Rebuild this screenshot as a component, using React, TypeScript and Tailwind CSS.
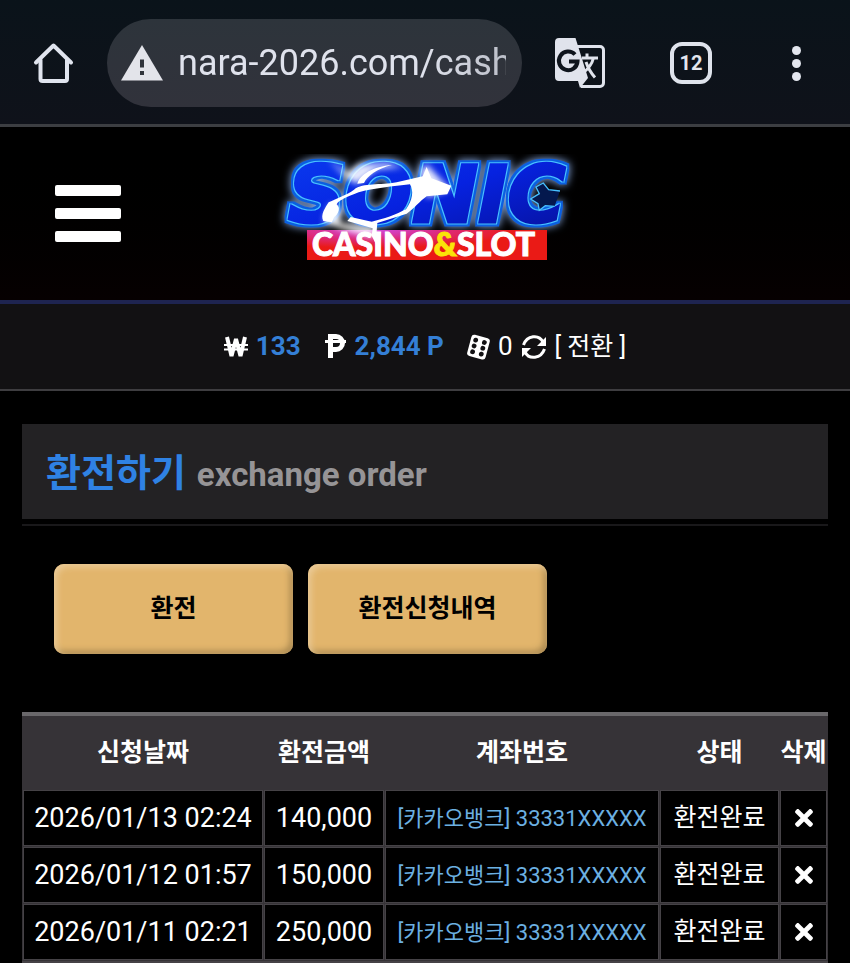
import { useState } from 'react';
import { FaTimes } from 'react-icons/fa';

interface ExchangeOrder {
  date: string;
  amount: string;
  account: string;
  status: string;
}

const initialOrders: ExchangeOrder[] = [
  { date: '2026/01/13 02:24', amount: '140,000', account: '[카카오뱅크] 33331XXXXX', status: '환전완료' },
  { date: '2026/01/12 01:57', amount: '150,000', account: '[카카오뱅크] 33331XXXXX', status: '환전완료' },
  { date: '2026/01/11 02:21', amount: '250,000', account: '[카카오뱅크] 33331XXXXX', status: '환전완료' },
];

function HomeIcon() {
  return (
    <svg width="42" height="42" viewBox="0 0 42 42" fill="none" stroke="#e0e4ee" strokeWidth="4" strokeLinecap="round" strokeLinejoin="round">
      <path d="M3 20.500L20.500 3.500L38 20.500" />
      <path d="M7.500 18V37a2 2 0 0 0 2 2H32a2 2 0 0 0 2-2V18" />
    </svg>
  );
}

function WarningIcon() {
  return (
    <svg width="42" height="36" viewBox="0 0 42 36" className="shrink-0">
      <path d="M21 0L42 35.500H0Z" fill="#e3e4ea" />
      <path d="M19 14.500h4v8h-4zM19 26h4v4h-4z" fill="#30343b" />
    </svg>
  );
}

function TranslateIcon() {
  return (
    <svg width="50" height="50" viewBox="0 0 50 50" fill="none">
      <path d="M21 8.500H45a3.500 3.500 0 0 1 3.500 3.500V45a3.500 3.500 0 0 1-3.500 3.500H26" stroke="#e0e3ec" strokeWidth="3" />
      <path d="M4 0H20.500L33 40L25 50L23 43H4a4 4 0 0 1-4-4V4a4 4 0 0 1 4-4Z" fill="#e0e3ec" />
      <path d="M20 16.500A9.300 9.300 0 1 0 22.500 23.500H14" stroke="#0e141c" strokeWidth="4" />
      <path d="M27 20H43M32 15.500V20M38.500 20C37 26 33 31 28 35M31 24C33 30 36 35 40 39.500" stroke="#e0e3ec" strokeWidth="3" />
    </svg>
  );
}

function BrowserBar() {
  const [url, setUrl] = useState('nara-2026.com/cash');

  return (
    <div className="flex h-[127px] items-center border-b-3 border-[#3c3e42] bg-linear-to-b from-[#0a131a] to-[#0f121a] pt-0.5 pr-11 pl-[33px]">
      <button aria-label="Home">
        <HomeIcon />
      </button>
      <div className="mr-[33px] ml-8 flex h-22 min-w-0 flex-1 items-center gap-[15px] rounded-full bg-linear-to-b from-[#2d343b] to-[#31323b] pr-4 pl-[14px]">
        <WarningIcon />
        <input
          type="text"
          aria-label="Address"
          value={url}
          onChange={(e) => setUrl(e.target.value)}
          className="w-full min-w-0 bg-transparent mask-r-from-75% mask-r-to-200% text-[36px] text-[#dfe2ec] outline-none"
        />
      </div>
      <button aria-label="Translate">
        <TranslateIcon />
      </button>
      <button
        aria-label="Tabs"
        className="ml-[65px] flex size-[42px] items-center justify-center rounded-xl border-4 border-[#dfe3ec] text-xl font-bold text-[#e3e6ee]"
      >
        12
      </button>
      <button aria-label="Menu" className="ml-[74px] flex w-5 flex-col items-center gap-1">
        <span className="size-[9px] rounded-full bg-[#e3e6ee]" />
        <span className="size-[9px] rounded-full bg-[#e3e6ee]" />
        <span className="size-[9px] rounded-full bg-[#e3e6ee]" />
      </button>
    </div>
  );
}

function Logo() {
  return (
    <svg width="310" height="120" viewBox="0 0 310 120" role="img" aria-label="SONIC CASINO&SLOT">
      <defs>
        {/* neon rim: cyan line, blue band, then a soft halo */}
        <filter id="neon" x="-10%" y="-30%" width="120%" height="160%" colorInterpolationFilters="sRGB">
          <feMorphology in="SourceAlpha" operator="dilate" radius="1" result="thin" />
          <feFlood floodColor="#48c0ff" />
          <feComposite in2="thin" operator="in" result="rim" />
          <feMorphology in="SourceAlpha" operator="dilate" radius="3" result="wide" />
          <feFlood floodColor="#0b5fe0" />
          <feComposite in2="wide" operator="in" result="band" />
          <feGaussianBlur in="wide" stdDeviation="4" result="soft" />
          <feFlood floodColor="#8fb2ee" />
          <feComposite in2="soft" operator="in" result="halo" />
          <feMerge>
            <feMergeNode in="halo" />
            <feMergeNode in="band" />
            <feMergeNode in="rim" />
            <feMergeNode in="SourceGraphic" />
          </feMerge>
        </filter>
        <filter id="spark" x="-30%" y="-30%" width="160%" height="160%">
          <feGaussianBlur stdDeviation="9" />
        </filter>
        <linearGradient id="letters" x1="0" y1="0" x2="1" y2="1">
          <stop offset="0" stopColor="#0a3cf0" />
          <stop offset="0.5" stopColor="#0622e0" />
          <stop offset="1" stopColor="#06109a" />
        </linearGradient>
        <radialGradient id="banner" cx="0.27" cy="0" r="0.6">
          <stop offset="0" stopColor="#cf4be0" />
          <stop offset="0.5" stopColor="#dd2a7c" />
          <stop offset="1" stopColor="#ea1a16" />
        </radialGradient>
      </defs>
      <text
        x="18"
        y="68"
        fontFamily="DejaVu Sans"
        fontWeight="bold"
        fontStyle="italic"
        fontSize="79"
        fill="url(#letters)"
        stroke="url(#letters)"
        strokeWidth="3"
        filter="url(#neon)"
      >
        SONIC
      </text>
      <rect x="37" y="76" width="240" height="30" fill="url(#banner)" />
      <g transform="translate(-10 -13) scale(0.3333)" fill="#ffffff">
        <g filter="url(#spark)" opacity="0.9">
          <path d="M205 56L262 96L300 70L380 66L430 78L350 84L290 130L262 112Z" />
          <path d="M190 240L210 190L240 200L240 245L345 260L340 290L240 262Z" />
          <path d="M480 90L500 70L570 145L500 170Z" />
        </g>
        <path d="M282 146C310 124 360 134 410 124L488 106L500 78L514 112L574 134L562 160L500 166C480 180 460 205 440 218L352 246L350 270L352 318L335 284L338 262L262 240L272 228L335 242C370 235 410 220 438 205C458 178 462 150 450 130C400 136 340 142 296 154C260 168 236 178 230 190C242 200 236 220 222 228L216 244L190 240C180 222 196 200 206 184C230 172 260 162 282 146Z" />
        <path d="M292 128C300 100 340 76 396 72C350 84 322 104 312 126Z" />
        <path d="M900 150L866 146L850 126L828 138L838 158L812 174L834 188L838 208L856 194L884 196Z" fill="#04184e" />
        <path d="M900 150L866 146L850 126L828 138L838 158L812 174L834 188L838 208L856 194L884 196" fill="none" stroke="#48c0ff" strokeWidth="4" />
      </g>
      <text x="42" y="102" fontFamily="Lato" fontWeight="900" fontSize="32" fill="#ffffff" stroke="#ffffff">
        CASINO
        <tspan fill="#fbe408" stroke="#fbe408">&amp;</tspan>
        SLOT
      </text>
    </svg>
  );
}

function SiteHeader() {
  return (
    <header className="grid h-[177px] grid-cols-[1fr_auto_1fr] items-center border-b-4 border-[#1e2450] bg-linear-to-b from-black to-[#060001]">
      <button aria-label="Menu" className="ml-[55px] flex w-[66px] flex-col gap-3">
        <span className="h-[11px] w-full rounded-xs bg-white" />
        <span className="h-[11px] w-full rounded-xs bg-white" />
        <span className="h-[11px] w-full rounded-xs bg-white" />
      </button>
      <Logo />
    </header>
  );
}

function WonIcon() {
  return (
    <svg width="24" height="22" viewBox="0 0 24 22" fill="none" stroke="#ffffff">
      <path d="M3 1L7.500 20L12 3L16.500 20L21 1" strokeWidth="4" strokeLinejoin="bevel" />
      <path d="M0 9H24M0 13.500H24" strokeWidth="2" />
    </svg>
  );
}

function PointIcon() {
  return (
    <svg width="22" height="40" viewBox="0 0 22 40" fill="none" stroke="#ffffff">
      <path d="M5.500 31V9.500H11a6.500 6.500 0 0 1 0 13H6" strokeWidth="5" />
      <path d="M0 14.500H21" strokeWidth="3" />
    </svg>
  );
}

function DiceIcon() {
  return (
    <svg width="24" height="26" viewBox="0 0 24 26">
      <g transform="rotate(15 12 13)">
        <rect x="3" y="2" width="19" height="22" rx="3" fill="#ffffff" />
        <g fill="#121113">
          <circle cx="8" cy="7" r="2.400" />
          <circle cx="8" cy="13" r="2.400" />
          <circle cx="8" cy="19" r="2.400" />
          <circle cx="17" cy="7" r="2.400" />
          <circle cx="17" cy="13" r="2.400" />
          <circle cx="17" cy="19" r="2.400" />
        </g>
      </g>
    </svg>
  );
}

function RefreshIcon() {
  return (
    <svg width="26" height="24" viewBox="0 0 26 24" fill="none" stroke="#ffffff" strokeWidth="3">
      <path d="M2.500 10C6 0 18 -1 22 7" />
      <path d="M23.500 14C20 24 8 25 4 17" />
      <path d="M25 2V11H16Z" fill="#ffffff" stroke="none" />
      <path d="M1 22V13H10Z" fill="#ffffff" stroke="none" />
    </svg>
  );
}

function BalanceBar() {
  return (
    <div className="flex h-[87px] items-center justify-center border-b-2 border-[#3e3d40] bg-[#121113] text-[26px]">
      <WonIcon />
      <span className="ml-2 font-bold text-[#347fd6]">133</span>
      <span className="mr-2 ml-6">
        <PointIcon />
      </span>
      <span className="font-bold text-[#347fd6]">2,844 P</span>
      <span className="mr-2 ml-[22px]">
        <DiceIcon />
      </span>
      <span>0</span>
      <button className="ml-2 flex items-center gap-2">
        <RefreshIcon />
        <span className="text-[25px]">[ 전환 ]</span>
      </button>
    </div>
  );
}

function OrderTable() {
  const [orders, setOrders] = useState(initialOrders);

  const removeOrder = (date: string) => {
    setOrders((prev) => prev.filter((order) => order.date !== date));
  };

  return (
    <table className="mt-[58px] w-full table-fixed border-separate border-spacing-px border-t-4 border-b-2 border-t-[#6a686b] border-b-[#454246] bg-[#363337] text-center whitespace-nowrap">
      <thead>
        <tr className="h-[72px] text-[25px]">
          <th className="w-[240px] p-0">신청날짜</th>
          <th className="w-[120px] p-0">환전금액</th>
          <th className="p-0">계좌번호</th>
          <th className="w-[119px] p-0">상태</th>
          <th className="w-[47px] p-0">삭제</th>
        </tr>
      </thead>
      <tbody>
        {orders.map((order) => (
          <tr key={order.date} className="h-14">
            <td className="border border-[#454246] bg-black p-0 text-[27px]">{order.date}</td>
            <td className="border border-[#454246] bg-black p-0 text-[27px]">{order.amount}</td>
            <td className="border border-[#454246] bg-black p-0 text-[22px] text-[#6cb0e2]">{order.account}</td>
            <td className="border border-[#454246] bg-black p-0 text-[25px]">{order.status}</td>
            <td className="border border-[#454246] bg-black p-0">
              <button aria-label="삭제" className="block w-full" onClick={() => removeOrder(order.date)}>
                <FaTimes size={26} className="mx-auto" />
              </button>
            </td>
          </tr>
        ))}
      </tbody>
    </table>
  );
}

export default function App() {
  return (
    <div className="min-h-screen bg-black font-['Roboto','Noto_Sans_CJK_KR',sans-serif] text-white">
      <BrowserBar />
      <SiteHeader />
      <BalanceBar />

      <main className="px-[22px] pt-[33px]">
        <div className="border-b-2 border-[#19181a] pb-[5px]">
          <h1 className="flex h-[95px] items-baseline gap-[11px] bg-[#232224] px-6 pt-[21px] font-bold">
            <span className="text-[38px] text-[#2f82e4]">환전하기</span>
            <span className="text-[33px] text-[#969496]">exchange order</span>
          </h1>
        </div>

        <div className="mt-[38px] ml-8 flex gap-[15px] text-[25px] font-bold text-black">
          <button className="h-[90px] w-[239px] rounded-[10px] bg-[#e2b56c] shadow-[inset_3px_3px_6px_#ebcb98,inset_-3px_-3px_6px_#a98850]">
            환전
          </button>
          <button className="h-[90px] w-[239px] rounded-[10px] bg-[#e2b56c] shadow-[inset_3px_3px_6px_#ebcb98,inset_-3px_-3px_6px_#a98850]">
            환전신청내역
          </button>
        </div>

        <OrderTable />
      </main>
    </div>
  );
}
